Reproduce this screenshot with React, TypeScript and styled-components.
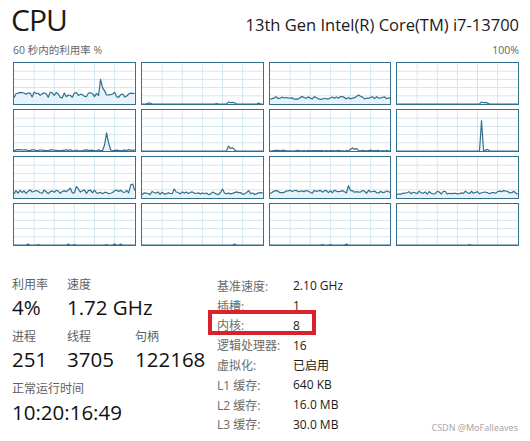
import React from "react";
import styled, { createGlobalStyle } from "styled-components";

const GlobalStyle = createGlobalStyle`
  html, body { margin: 0; padding: 0; background: #ffffff; }
  body {
    font-family: "Segoe UI", "Open Sans", "Noto Sans CJK SC", sans-serif;
    color: #1a1a1a;
  }
`;

const Page = styled.div`
  position: relative;
  width: 530px;
  height: 441px;
  box-sizing: border-box;
  padding: 0 11px 0 12px;
  overflow: hidden;
`;

const Header = styled.div`
  display: flex;
  justify-content: space-between;
  align-items: baseline;
  height: 42px;
`;

const Title = styled.div`
  font-size: 30px;
  line-height: 40px;
  letter-spacing: -1px;
  margin-left: -1px;
`;

const Model = styled.div`
  font-size: 16.5px;
  line-height: 40px;
`;

const SubHeader = styled.div`
  display: flex;
  justify-content: space-between;
  font-size: 10.5px;
  line-height: 14px;
  color: #666;
  margin: 1px 0 5px 1px;
`;

const Graphs = styled.div`
  display: grid;
  grid-template-columns: repeat(4, 1fr);
  grid-auto-rows: 43px;
  column-gap: 5px;
  row-gap: 4px;
  margin-left: 1px;
`;

const GraphBox = styled.div`
  border: 1px solid #33708e;
  background: #ffffff;
  box-sizing: border-box;
  overflow: hidden;
`;

const GraphSvg = styled.svg`
  display: block;
  width: 100%;
  height: 100%;
`;

const Details = styled.div`
  display: flex;
  margin-top: 28px;
`;

const Stats = styled.div`
  display: grid;
  grid-template-columns: 55px 68px auto;
  grid-auto-rows: auto;
  row-gap: 8px;
  width: 205px;
  align-content: start;
  padding-top: 3px;
`;

const Stat = styled.div<{ $span?: number }>`
  display: flex;
  flex-direction: column;
  grid-column: span ${(p) => p.$span ?? 1};
`;

const StatLabel = styled.div`
  font-size: 12px;
  line-height: 16px;
  color: #5f5f5f;
`;

const StatValue = styled.div<{ $lift?: number }>`
  font-size: 20.5px;
  line-height: 28px;
  color: #111;
  white-space: nowrap;
  margin-top: ${(p) => p.$lift ?? 0}px;
`;

const Info = styled.div`
  display: grid;
  grid-template-columns: 76px auto;
  grid-auto-rows: 19.8px;
  align-items: center;
  margin-top: 2px;
`;

const InfoLabel = styled.div`
  font-size: 12px;
  color: #6a6a6a;
  position: relative;
  white-space: nowrap;
`;

const InfoValue = styled.div`
  font-size: 12px;
  color: #1a1a1a;
  white-space: nowrap;
`;

const Highlight = styled.div`
  position: absolute;
  left: -9px;
  top: -6px;
  width: 108px;
  height: 25px;
  border: 4px solid #d8222c;
  box-sizing: border-box;
  pointer-events: none;
`;

const Watermark = styled.div`
  position: absolute;
  right: 12px;
  bottom: 7px;
  font-size: 9px;
  color: #a8a8a8;
  font-family: "Noto Sans", sans-serif;
`;

type Spec = {
  base: number;
  noise: number;
  spikes?: [number, number][];
  fill?: boolean;
};

const W = 120;
const H = 41;
const N = 60;

function makeRng(seed: number) {
  let s = seed;
  return () => {
    s = (s * 16807) % 2147483647;
    return (s - 1) / 2147483646;
  };
}

function series(spec: Spec, seed: number): number[] {
  const r = makeRng(seed);
  const out: number[] = [];
  for (let i = 0; i <= N; i++) {
    let v = spec.base > 0 ? spec.base + (r() - 0.5) * 2 * spec.noise : 0;
    if (v < 0) v = 0;
    out.push(v);
  }
  (spec.spikes ?? []).forEach(([i, h]) => {
    if (i >= 0 && i <= N) out[i] = h;
  });
  return out;
}

const specs: Spec[] = [
  { base: 22, noise: 7, spikes: [[43, 60], [44, 40], [45, 32], [46, 22]], fill: true },
  { base: 0, noise: 0, spikes: [[3, 2], [4, 2], [37, 1], [43, 5], [44, 3], [45, 4], [46, 3], [58, 2]] },
  { base: 15, noise: 3.5, spikes: [[44, 22], [45, 19]], fill: true },
  { base: 0, noise: 0, spikes: [[42, 5], [43, 3], [44, 4], [45, 2]] },

  { base: 2, noise: 1.5, spikes: [[45, 15], [46, 44], [47, 20], [48, 3]], fill: true },
  { base: 0, noise: 0, spikes: [[43, 12], [44, 6], [45, 8], [46, 2]] },
  { base: 0.8, noise: 1, spikes: [[40, 4], [41, 7], [42, 4], [43, 6], [50, 2]] },
  { base: 0, noise: 0, spikes: [[41, 0], [42, 74], [43, 0], [44, 2], [45, 4]] },

  { base: 15, noise: 5, spikes: [[28, 24], [31, 28], [32, 22], [58, 32], [59, 34], [60, 18]], fill: true },
  { base: 12, noise: 4, spikes: [[16, 22], [40, 22], [53, 18]], fill: true },
  { base: 15, noise: 4, spikes: [[39, 30], [40, 18]], fill: true },
  { base: 13, noise: 4, spikes: [[53, 18], [54, 17]], fill: true },

  { base: 0, noise: 0, spikes: [[7, 2], [12, 1], [27, 2], [30, 1], [46, 1], [50, 2], [53, 2]] },
  { base: 0, noise: 0, spikes: [[46, 2]] },
  { base: 0, noise: 0, spikes: [[26, 1], [30, 1], [38, 2]] },
  { base: 0, noise: 0, spikes: [[36, 1]] },
];

const Graph: React.FC<{ spec: Spec; seed: number }> = ({ spec, seed }) => {
  const data = series(spec, seed);
  const pts = data.map((v, i) => `${((i / N) * W).toFixed(2)},${(H - (v / 100) * H).toFixed(2)}`);
  const line = pts.join(" ");
  const area = `0,${H} ${line} ${W},${H}`;
  const vLines = [1, 2, 3, 4, 5].map((k) => (k * W) / 6);
  const hLines = [1, 2, 3, 4].map((k) => (k * H) / 5);
  return (
    <GraphBox>
      <GraphSvg viewBox={`0 0 ${W} ${H}`} preserveAspectRatio="none">
        {vLines.map((x) => (
          <line key={`v${x}`} x1={x} y1={0} x2={x} y2={H} stroke="#d3e5ef" strokeWidth={1} vectorEffect="non-scaling-stroke" />
        ))}
        {hLines.map((y) => (
          <line key={`h${y}`} x1={0} y1={y} x2={W} y2={y} stroke="#d3e5ef" strokeWidth={1} vectorEffect="non-scaling-stroke" />
        ))}
        {spec.fill && <polygon points={area} fill="#e3f0f8" fillOpacity={0.85} />}
        <polyline points={line} fill="none" stroke="#33708e" strokeWidth={1.2} vectorEffect="non-scaling-stroke" strokeLinejoin="round" />
      </GraphSvg>
    </GraphBox>
  );
};

const info: [string, string][] = [
  ["基准速度:", "2.10 GHz"],
  ["插槽:", "1"],
  ["内核:", "8"],
  ["逻辑处理器:", "16"],
  ["虚拟化:", "已启用"],
  ["L1 缓存:", "640 KB"],
  ["L2 缓存:", "16.0 MB"],
  ["L3 缓存:", "30.0 MB"],
];

export default function App() {
  return (
    <>
      <GlobalStyle />
      <Page>
        <Header>
          <Title>CPU</Title>
          <Model>13th Gen Intel(R) Core(TM) i7-13700</Model>
        </Header>
        <SubHeader>
          <span>60 秒内的利用率 %</span>
          <span>100%</span>
        </SubHeader>
        <Graphs>
          {specs.map((s, i) => (
            <Graph key={i} spec={s} seed={i * 97 + 13} />
          ))}
        </Graphs>
        <Details>
          <Stats>
            <Stat>
              <StatLabel>利用率</StatLabel>
              <StatValue>4%</StatValue>
            </Stat>
            <Stat $span={2}>
              <StatLabel>速度</StatLabel>
              <StatValue>1.72 GHz</StatValue>
            </Stat>
            <Stat>
              <StatLabel>进程</StatLabel>
              <StatValue>251</StatValue>
            </Stat>
            <Stat>
              <StatLabel>线程</StatLabel>
              <StatValue>3705</StatValue>
            </Stat>
            <Stat>
              <StatLabel>句柄</StatLabel>
              <StatValue>122168</StatValue>
            </Stat>
            <Stat $span={3}>
              <StatLabel>正常运行时间</StatLabel>
              <StatValue $lift={1}>10:20:16:49</StatValue>
            </Stat>
          </Stats>
          <Info>
            {info.map(([k, v]) => (
              <React.Fragment key={k}>
                <InfoLabel>
                  {k}
                  {k === "内核:" && <Highlight />}
                </InfoLabel>
                <InfoValue>{v}</InfoValue>
              </React.Fragment>
            ))}
          </Info>
        </Details>
        <Watermark>CSDN @MoFalleaves</Watermark>
      </Page>
    </>
  );
}
